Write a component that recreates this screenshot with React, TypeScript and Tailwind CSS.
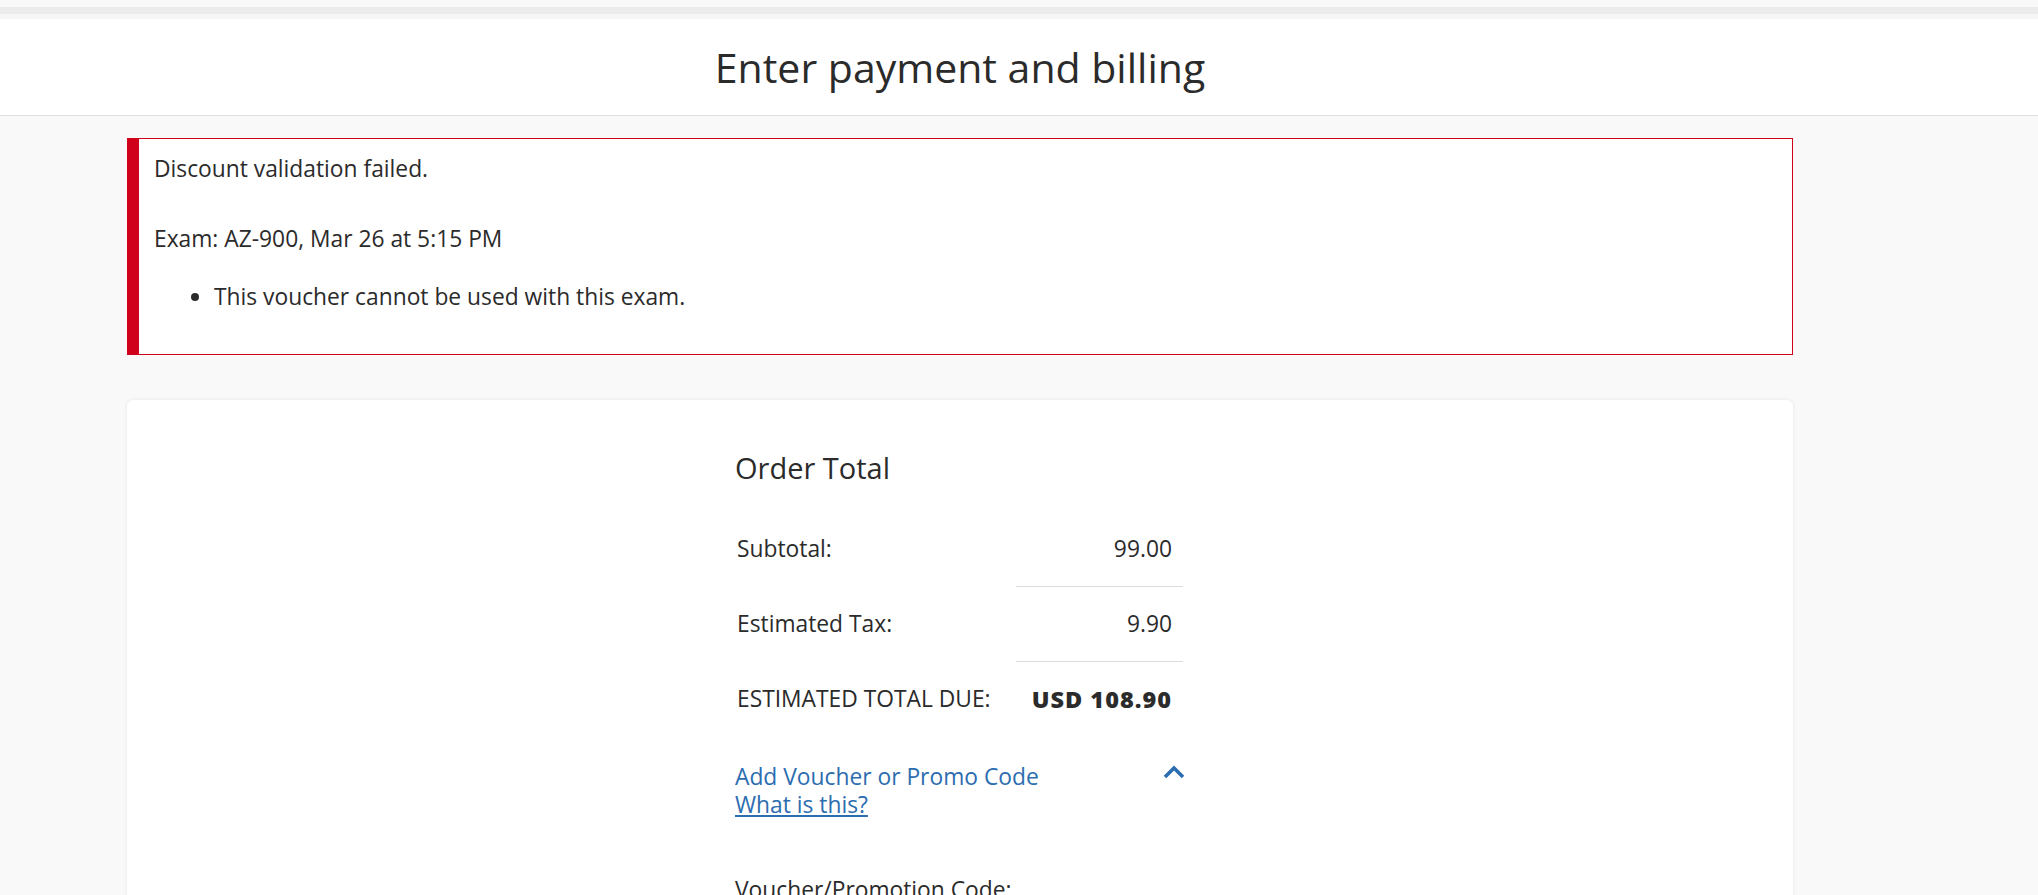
const rows = [
  { label: "Subtotal:", value: "99.00" },
  { label: "Estimated Tax:", value: "9.90" },
];

const App = () => {
  return (
    <div className="min-h-screen bg-[#f9f9f9] font-['Open_Sans',sans-serif] text-[#2b2b2b]">
      {/* top strip */}
      <div className="h-[7px] bg-[#f9f9f9]"></div>
      <div className="h-[7px] bg-[#ececec]"></div>
      <div className="h-[5px] bg-[#f6f6f6]"></div>

      {/* Header */}
      <header className="bg-white border-b border-[#e0e0e0]">
        <div className="ml-[127px] w-[1666px] h-[96px] flex items-center justify-center">
          <h1 className="text-[41px] leading-none text-[#2b2b2b]">Enter payment and billing</h1>
        </div>
      </header>

      <main className="ml-[127px] w-[1666px] pt-[22px]">
        {/* Error alert */}
        <div className="h-[217px] bg-white border border-[#d0021b] border-l-[12px] pl-[15px] pt-[16px] text-[22.8px] leading-[28px]">
          <p>Discount validation failed.</p>
          <p className="mt-[42px]">Exam: AZ-900, Mar 26 at 5:15 PM</p>
          <ul className="list-disc pl-[60px] mt-[30px]">
            <li>This voucher cannot be used with this exam.</li>
          </ul>
        </div>

        {/* Order card */}
        <div className="mt-[45px] bg-white rounded-md shadow-[0_0_4px_rgba(0,0,0,0.08)] h-[600px]">
          <div className="w-[450px] mx-auto pt-[48px]">
            <h2 className="text-[29px] leading-[40px]">Order Total</h2>

            <div className="mt-[24px] text-[22.8px]">
              {rows.map((r) => (
                <div key={r.label} className="flex h-[75px] items-center">
                  <div className="flex-1 pl-[2px]">{r.label}</div>
                  <div className="w-[167px] mr-[2px] h-full flex items-center justify-end pr-[11px] border-b border-[#dcdcdc]">
                    {r.value}
                  </div>
                </div>
              ))}
              <div className="flex h-[75px] items-center">
                <div className="flex-1 pl-[2px]">ESTIMATED TOTAL DUE:</div>
                <div className="w-[167px] mr-[2px] text-right pr-[11px] font-extrabold tracking-[1px] text-[23.5px]">USD 108.90</div>
              </div>
            </div>

            <div className="mt-[26px] flex items-start justify-between text-[#2c6db0] text-[22.8px] leading-[28px]">
              <div>
                <div>Add Voucher or Promo Code</div>
                <a href="#" className="underline">What is this?</a>
              </div>
              <svg width="24" height="16" viewBox="0 0 24 16" className="mt-[1px] mr-[-1px]">
                <polyline points="3,13 12,4 21,13" fill="none" stroke="currentColor" strokeWidth="3.6" />
              </svg>
            </div>

            <div className="mt-[57px] text-[22.8px] leading-[28px]">Voucher/Promotion Code:</div>
          </div>
        </div>
      </main>
    </div>
  );
};

export default App;
